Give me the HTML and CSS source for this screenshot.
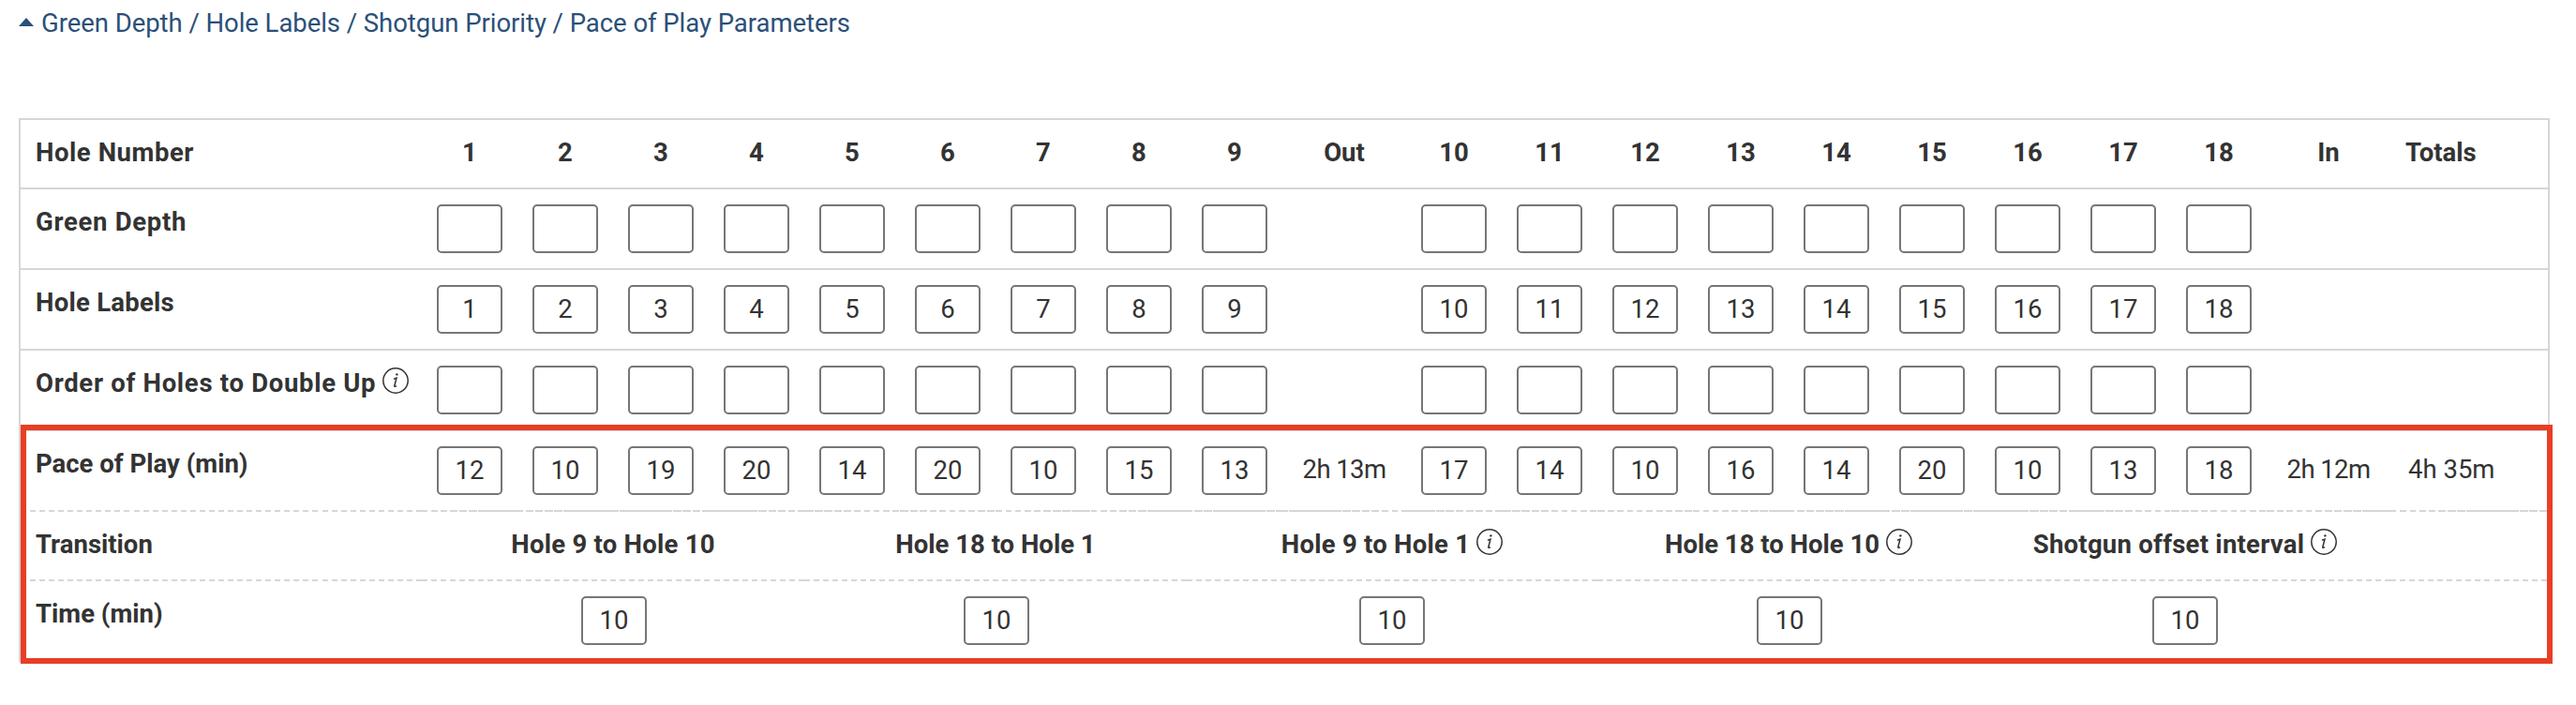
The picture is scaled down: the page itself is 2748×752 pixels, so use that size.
FILE: index.html
```html
<!DOCTYPE html>
<html lang="en">
<head>
    <meta charset="UTF-8">
    <title>Pace of Play Parameters</title>
    <link rel="stylesheet" href="styles.css">
</head>
<body>

<a class="toggle" href="#">
    <svg class="caret" viewBox="0 0 16 9"><path d="M0 9 L8 0 L16 9 Z"/></svg>
    <span class="toggle-text">Green Depth / Hole Labels / Shotgun Priority / Pace of Play Parameters</span>
</a>

<div class="hole-table">
    <div class="row header" id="holeNumber"><div class="label"><span class="spaced">Hole Number</span></div></div>
    <div class="row" id="greenDepth"><div class="label"><span class="spaced-more">Green Depth</span></div></div>
    <div class="row" id="holeLabels"><div class="label"><span class="spaced-less">Hole Labels</span></div></div>
    <div class="row" id="doubleUp"><div class="label"><span class="spaced-more">Order of Holes to Double Up</span><svg class="info" viewBox="0 0 28 28"><circle cx="14" cy="14" r="13.2"/><path d="M12 12.2 L15 11.2 L12.8 19.5 Q12.6 21 15 19.6"/><circle class="dot" cx="15.4" cy="7.4" r="1.2"/></svg></div></div>
    <div class="highlight">
        <div class="row pace" id="pace"><div class="label"><span>Pace of Play (min)</span></div></div>
        <div class="row transition">
            <div class="label"><span>Transition</span></div>
            <div class="group"><span class="spaced-less">Hole 9 to Hole 10</span></div>
            <div class="group"><span>Hole 18 to Hole 1</span></div>
            <div class="group wide"><span class="spaced-less">Hole 9 to Hole 1</span><svg class="info" viewBox="0 0 28 28"><circle cx="14" cy="14" r="13.2"/><path d="M12 12.2 L15 11.2 L12.8 19.5 Q12.6 21 15 19.6"/><circle class="dot" cx="15.4" cy="7.4" r="1.2"/></svg></div>
            <div class="group"><span>Hole 18 to Hole 10</span><svg class="info" viewBox="0 0 28 28"><circle cx="14" cy="14" r="13.2"/><path d="M12 12.2 L15 11.2 L12.8 19.5 Q12.6 21 15 19.6"/><circle class="dot" cx="15.4" cy="7.4" r="1.2"/></svg></div>
            <div class="group wide"><span class="spaced-less">Shotgun offset interval</span><svg class="info" viewBox="0 0 28 28"><circle cx="14" cy="14" r="13.2"/><path d="M12 12.2 L15 11.2 L12.8 19.5 Q12.6 21 15 19.6"/><circle class="dot" cx="15.4" cy="7.4" r="1.2"/></svg></div>
            <div class="rest"></div>
        </div>
        <div class="row time">
            <div class="label"><span>Time (min)</span></div>
            <div class="group"><input type="text" value="10"></div>
            <div class="group"><input type="text" value="10"></div>
            <div class="group wide"><input type="text" value="10"></div>
            <div class="group"><input type="text" value="10"></div>
            <div class="group wide"><input type="text" value="10"></div>
        </div>
    </div>
</div>

<script>
    const paceValues = [12, 10, 19, 20, 14, 20, 10, 15, 13, 17, 14, 10, 16, 14, 20, 10, 13, 18];

    function addCell(row, className, text) {
        const cell = document.createElement('div');
        cell.className = className;
        cell.textContent = text;
        row.appendChild(cell);
        return cell;
    }

    function fillRow(id, getValue, sums) {
        const row = document.getElementById(id);
        for (let hole = 1; hole <= 18; hole++) {
            if (id === 'holeNumber') {
                addCell(row, 'hole', hole);
            } else {
                const input = document.createElement('input');
                input.type = 'text';
                input.value = getValue(hole);
                addCell(row, 'hole', '').appendChild(input);
            }
            if (hole === 9) {
                addCell(row, 'sum', sums[0]);
            }
        }
        addCell(row, 'sum', sums[1]);
        addCell(row, 'total', sums[2]);
    }

    fillRow('holeNumber', null, ['Out', 'In', 'Totals']);
    fillRow('greenDepth', () => '', ['', '', '']);
    fillRow('holeLabels', hole => hole, ['', '', '']);
    fillRow('doubleUp', () => '', ['', '', '']);
    fillRow('pace', hole => paceValues[hole - 1], ['2h 13m', '2h 12m', '4h 35m']);
</script>

</body>
</html>
```
FILE: styles.css
```css
* {
    box-sizing: border-box;
}
body {
    margin: 0;
    padding: 8px 28px 0 20px;
    height: 752px;
    background: #fff;
    color: #333;
    font-family: Roboto, sans-serif;
    font-size: 27.5px;
    line-height: 34px;
}
.toggle {
    display: flex;
    align-items: center;
    height: 34px;
    margin-bottom: 84px;
    color: #2b5079;
    text-decoration: none;
    white-space: nowrap;
}
.toggle-text {
    letter-spacing: -0.05px;
}
.caret {
    width: 16px;
    height: 9px;
    margin: 0 8px 3px 0;
    fill: #2b5079;
}
.hole-table {
    width: 2700px;
    border: 2px solid #d6d6d6;
    border-bottom: 0;
}
.row {
    display: flex;
    height: 86px;
    border-bottom: 2px solid #d6d6d6;
}
.row.header {
    height: 74px;
    font-weight: bold;
}
.label {
    flex: none;
    display: flex;
    width: 428px;
    padding: 18px 0 0 16px;
    font-weight: bold;
    white-space: nowrap;
}
.spaced {
    letter-spacing: 0.55px;
}
.spaced-more {
    letter-spacing: 0.7px;
}
.spaced-less {
    letter-spacing: 0.25px;
}
.hole, .sum, .total {
    flex: none;
    width: 102px;
    padding-top: 24px;
    text-align: center;
    white-space: nowrap;
}
.hole {
    padding-top: 16px;
}
.sum {
    width: 132px;
    letter-spacing: -0.6px;
}
.total {
    width: 168px;
    padding-left: 19px;
    text-align: left;
}
.row.header .hole, .row.header .sum, .row.header .total {
    padding-top: 18px;
    letter-spacing: normal;
}
.row.header .total {
    padding-left: 16px;
}
input {
    display: block;
    width: 70px;
    height: 52px;
    margin: 0 auto;
    padding: 0 0 2px;
    border: 2px solid #767676;
    border-radius: 5px;
    background: #fff;
    color: #333;
    font: inherit;
    text-align: center;
}
.info {
    flex: none;
    width: 28px;
    height: 28px;
    margin: 0 0 0 7px;
    fill: none;
    stroke: #333;
    stroke-width: 1.5;
}
.info .dot {
    fill: #333;
    stroke: none;
}
/* red frame is drawn over the table edges */
.highlight {
    position: relative;
}
.highlight::after {
    content: "";
    box-sizing: border-box;
    position: absolute;
    left: 0;
    right: -5px;
    top: -7px;
    height: 255px;
    border: 6px solid #e83e25;
    pointer-events: none;
}
.row.pace, .row.transition {
    border-bottom: 0;
}
.row.transition {
    height: 74px;
}
/* dashed cell borders, every cell starts and ends with a dash */
.pace .hole, .pace .sum, .pace .total {
    background: repeating-linear-gradient(90deg, #d6d6d6 0 6px, transparent 6px 10.6px) left bottom / 100% 2px no-repeat;
}
.row.pace {
    background: repeating-linear-gradient(90deg, #d6d6d6 0 6px, transparent 6px 10.05px) 428px bottom / 100% 2px no-repeat;
}
.transition .group, .transition .rest {
    background: repeating-linear-gradient(90deg, #d6d6d6 0 6px, transparent 6px 10.05px) left bottom / 100% 2px no-repeat;
}
.pace .label, .transition .label {
    background: repeating-linear-gradient(90deg, #d6d6d6 0 6px, transparent 6px 10.05px) 10px bottom / 100% 2px no-repeat;
}
.rest {
    flex: 1;
}
.group {
    flex: none;
    display: flex;
    justify-content: center;
    width: 408px;
    padding-top: 18px;
    font-weight: bold;
    white-space: nowrap;
}
.group.wide {
    width: 438px;
}
.row.time {
    border-bottom: 0;
}
.row.time .group {
    padding-top: 16px;
    font-weight: normal;
}
.row.time .group:not(.wide) {
    padding-left: 2px;
}
```
